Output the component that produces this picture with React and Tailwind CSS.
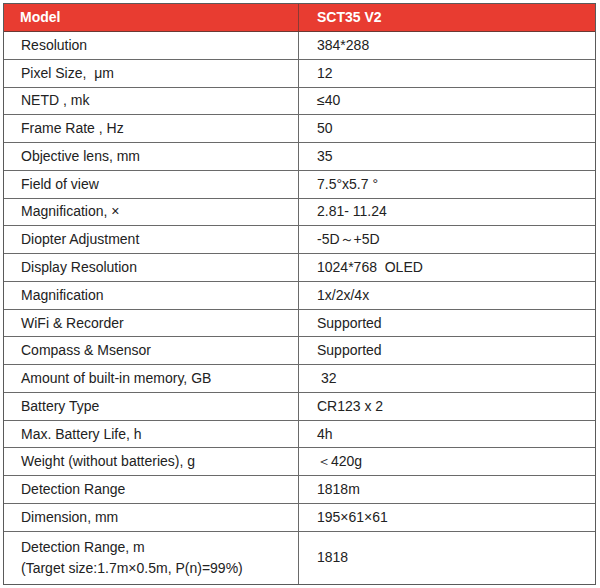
const rows = [
  ['Resolution', '384*288'],
  ['Pixel Size,  μm', '12'],
  ['NETD , mk', '≤40'],
  ['Frame Rate , Hz', '50'],
  ['Objective lens, mm', '35'],
  ['Field of view', '7.5°x5.7 °'],
  ['Magnification, ×', '2.81- 11.24'],
  ['Diopter Adjustment', '-5D～+5D'],
  ['Display Resolution', '1024*768  OLED'],
  ['Magnification', '1x/2x/4x'],
  ['WiFi & Recorder', 'Supported'],
  ['Compass & Msensor', 'Supported'],
  ['Amount of built-in memory, GB', ' 32'],
  ['Battery Type', 'CR123 x 2'],
  ['Max. Battery Life, h', '4h'],
  ['Weight (without batteries), g', '＜420g'],
  ['Detection Range', '1818m'],
  ['Dimension, mm', '195×61×61'],
];

export default function App() {
  return (
    <div className="w-[600px] h-[588px] bg-white pt-[3px] pl-[3px]" style={{ fontFamily: '"Liberation Sans", Arial, sans-serif' }}>
      <div className="w-[593px] border border-[#5a5a5a] text-[14px] text-[#222]">
        {/* header */}
        <div className="flex h-[28px] bg-[#e83c31] border-b border-[#6a3a35] text-white font-bold">
          <div className="w-[295px] flex items-center pl-[16px] border-r border-[#8a3a33]">Model</div>
          <div className="flex-1 flex items-center pl-[18px]">SCT35 V2</div>
        </div>

        {rows.map(([k, v], i) => (
          <div key={i} className="flex h-[27.78px] border-b border-[#6a6a6a]">
            <div className="w-[295px] flex items-center pl-[17px] border-r border-[#6a6a6a] whitespace-pre">{k}</div>
            <div className="flex-1 flex items-center pl-[18px] whitespace-pre">{v}</div>
          </div>
        ))}

        {/* last row, two lines */}
        <div className="flex h-[52px]">
          <div className="w-[295px] flex flex-col justify-center pl-[17px] border-r border-[#6a6a6a] leading-[21px]">
            <span>Detection Range, m</span>
            <span>(Target size:1.7m×0.5m, P(n)=99%)</span>
          </div>
          <div className="flex-1 flex items-center pl-[18px]">1818</div>
        </div>
      </div>
    </div>
  );
}
